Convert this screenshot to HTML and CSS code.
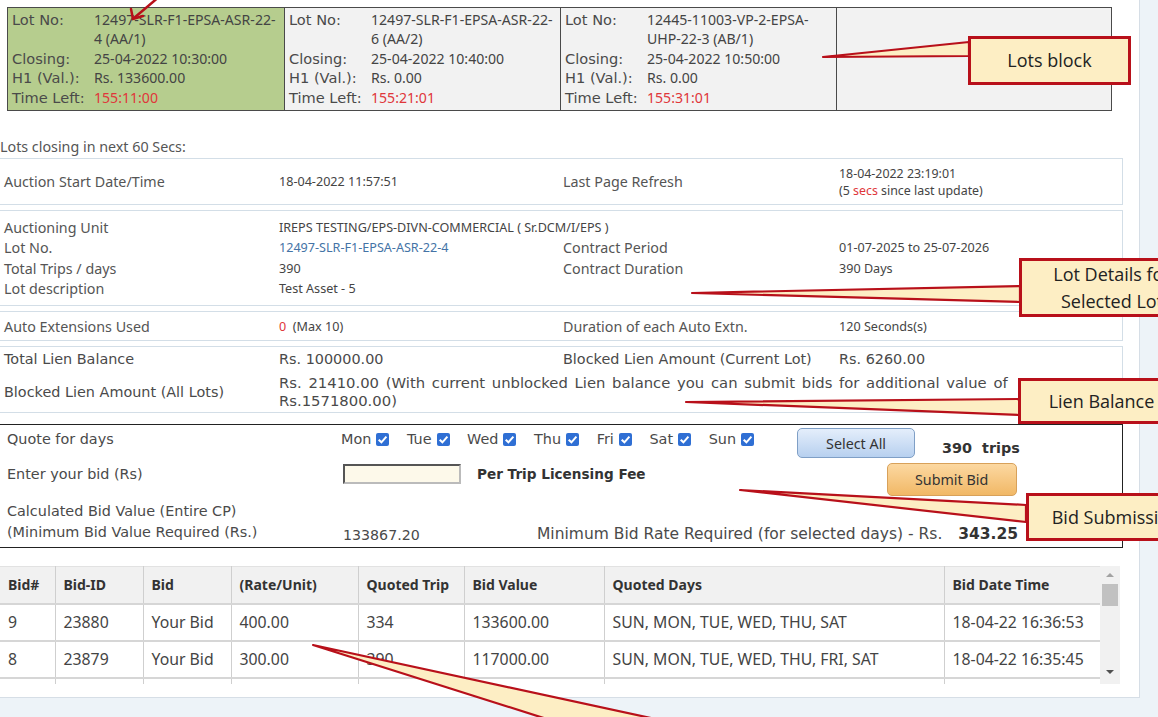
FILE: index.html
```html
<!DOCTYPE html>
<html>
<head>
<meta charset="utf-8">
<link rel="stylesheet" href="styles.css">
</head>
<body>
<div class="page">
  <div class="panel">
    <div class="lots">
      <div class="lot lot-sel">
        <span class="lk">Lot No:</span><span class="lv">12497-SLR-F1-EPSA-ASR-22-<br>4 (AA/1)</span>
        <span class="lk">Closing:</span><span class="lv">25-04-2022 10:30:00</span>
        <span class="lk">H1 (Val.):</span><span class="lv">Rs. 133600.00</span>
        <span class="lk">Time Left:</span><span class="lv red">155:11:00</span>
      </div>
      <div class="lot">
        <span class="lk">Lot No:</span><span class="lv">12497-SLR-F1-EPSA-ASR-22-<br>6 (AA/2)</span>
        <span class="lk">Closing:</span><span class="lv">25-04-2022 10:40:00</span>
        <span class="lk">H1 (Val.):</span><span class="lv">Rs. 0.00</span>
        <span class="lk">Time Left:</span><span class="lv red">155:21:01</span>
      </div>
      <div class="lot">
        <span class="lk">Lot No:</span><span class="lv">12445-11003-VP-2-EPSA-<br>UHP-22-3 (AB/1)</span>
        <span class="lk">Closing:</span><span class="lv">25-04-2022 10:50:00</span>
        <span class="lk">H1 (Val.):</span><span class="lv">Rs. 0.00</span>
        <span class="lk">Time Left:</span><span class="lv red">155:31:01</span>
      </div>
      <div class="lot lot-empty"></div>
    </div>

    <div class="closing">Lots closing in next 60 Secs:</div>

    <div class="box box-start">
      <span class="k">Auction Start Date/Time</span>
      <span class="v">18-04-2022 11:57:51</span>
      <span class="k">Last Page Refresh</span>
      <span class="v small">18-04-2022 23:19:01<br>(5 <span class="red">secs</span> since last update)</span>
    </div>

    <div class="box box-details">
      <span class="k">Auctioning Unit</span>
      <span class="v span3">IREPS TESTING/EPS-DIVN-COMMERCIAL ( Sr.DCM/I/EPS )</span>
      <span class="k">Lot No.</span>
      <span class="v link">12497-SLR-F1-EPSA-ASR-22-4</span>
      <span class="k">Contract Period</span>
      <span class="v">01-07-2025 to 25-07-2026</span>
      <span class="k">Total Trips / days</span>
      <span class="v">390</span>
      <span class="k">Contract Duration</span>
      <span class="v">390 Days</span>
      <span class="k">Lot description</span>
      <span class="v span3">Test Asset - 5</span>
    </div>

    <div class="box box-ext">
      <span class="k">Auto Extensions Used</span>
      <span class="v"><span class="red">0</span>&nbsp; (Max 10)</span>
      <span class="k">Duration of each Auto Extn.</span>
      <span class="v">120 Seconds(s)</span>
    </div>

    <div class="box box-lien">
      <span class="lk2">Total Lien Balance</span>
      <span class="lv2">Rs. 100000.00</span>
      <span class="lk2">Blocked Lien Amount (Current Lot)</span>
      <span class="lv2">Rs. 6260.00</span>
      <span class="lk2 mid">Blocked Lien Amount (All Lots)</span>
      <span class="lv2 span3 long">Rs. 21410.00 (With current unblocked Lien balance you can submit bids for additional value of<br>Rs.1571800.00)</span>
    </div>

    <div class="bid">
      <div class="brow brow1">
        <span class="blabel">Quote for days</span>
        <div class="days">
          <span class="day">Mon <i class="cb"></i></span>
          <span class="day">Tue <i class="cb"></i></span>
          <span class="day">Wed <i class="cb"></i></span>
          <span class="day">Thu <i class="cb"></i></span>
          <span class="day">Fri <i class="cb"></i></span>
          <span class="day">Sat <i class="cb"></i></span>
          <span class="day">Sun <i class="cb"></i></span>
        </div>
        <span class="btn btn-blue">Select All</span>
        <span class="trips">390&nbsp; trips</span>
      </div>
      <div class="brow brow2">
        <span class="blabel">Enter your bid (Rs)</span>
        <span class="inp"></span>
        <span class="fee">Per Trip Licensing Fee</span>
        <span class="btn btn-orange">Submit Bid</span>
      </div>
      <div class="brow brow3">
        <span class="blabel">Calculated Bid Value (Entire CP)<br>(Minimum Bid Value Required (Rs.)</span>
        <span class="calc">133867.20</span>
        <span class="minrate">Minimum Bid Rate Required (for selected days) - Rs.&nbsp; <b>343.25</b></span>
      </div>
    </div>

    <div class="grid-wrap">
      <div class="grid-clip">
        <table class="grid">
          <thead>
            <tr><th class="c1">Bid#</th><th class="c2">Bid-ID</th><th class="c3">Bid</th><th class="c4">(Rate/Unit)</th><th class="c5">Quoted Trip</th><th class="c6">Bid Value</th><th class="c7">Quoted Days</th><th class="c8">Bid Date Time</th></tr>
          </thead>
          <tbody>
            <tr><td>9</td><td>23880</td><td>Your Bid</td><td>400.00</td><td>334</td><td>133600.00</td><td>SUN, MON, TUE, WED, THU, SAT</td><td>18-04-22 16:36:53</td></tr>
            <tr><td>8</td><td>23879</td><td>Your Bid</td><td>300.00</td><td>390</td><td>117000.00</td><td>SUN, MON, TUE, WED, THU, FRI, SAT</td><td>18-04-22 16:35:45</td></tr>
            <tr><td>&nbsp;</td><td></td><td></td><td></td><td></td><td></td><td></td><td></td></tr>
          </tbody>
        </table>
      </div>
      <div class="sbar">
        <span class="sb-up"></span>
        <span class="sb-thumb"></span>
        <span class="sb-down"></span>
      </div>
    </div>
  </div>

  <svg class="annot" width="1158" height="717" viewBox="0 0 1158 717">
    <g fill="#fdeec4" stroke="#b8101a" stroke-width="2.2" stroke-linejoin="round">
      <polygon points="823,57 969,42 969,56"/>
      <polygon points="692,293 1020,286 1020,302"/>
      <polygon points="686,402 1020,399 1020,415"/>
      <polygon points="740,490 1026,505 1026,522"/>
      <polygon points="313,645 550,720 660,720"/>
    </g>
    <g stroke="#b8101a" stroke-width="2.5" fill="none" stroke-linecap="round">
      <line x1="160" y1="-4" x2="134" y2="18"/>
      <polyline points="131,9 133,19 143,16"/>
    </g>
  </svg>

  <div class="callout co-lots">Lots block</div>
  <div class="callout co-details">Lot Details for<br>Selected Lot</div>
  <div class="callout co-lien">Lien Balance</div>
  <div class="callout co-bid">Bid Submission</div>
</div>
</body>
</html>
```

FILE: styles.css
```css
* { box-sizing: border-box; }
html, body { margin: 0; padding: 0; }
body {
  background: #edf3f8;
  width: 1158px;
  height: 717px;
  overflow: hidden;
  font-family: "Noto Sans", "DejaVu Sans", sans-serif;
  color: #444;
}
.page { position: relative; width: 1158px; height: 717px; overflow: hidden; }

.panel {
  width: 1140px;
  height: 698px;
  background: #fff;
  border-right: 1px solid #d6dee6;
  border-bottom: 1px solid #d6dee6;
  padding-top: 7px;
  overflow: hidden;
}

/* ---------- lots block ---------- */
.lots {
  margin-left: 7px;
  width: 1105px;
  height: 104px;
  border: 1px solid #4a4a4a;
  display: flex;
}
.lot {
  display: grid;
  grid-template-columns: 82px 1fr;
  grid-auto-rows: min-content;
  align-content: start;
  padding: 2px 0 0 4px;
  line-height: 19.4px;
  background: #f2f2f2;
  border-right: 1px solid #4a4a4a;
  width: 276px;
  flex: none;
}
.lot-sel { background: #b6cd8e; width: 277px; }
.lot-empty { flex: 1; border-right: none; }
.lk { font-family: "DejaVu Sans", sans-serif; font-size: 14.6px; color: #4a4a4a; white-space: nowrap; }
.lv { font-family: "Noto Sans", sans-serif; font-size: 14.1px; color: #444; white-space: nowrap; }
.red { color: #e0363a; }

.closing {
  margin: 26px 0 0 0;
  font-size: 14.3px;
  color: #555;
  line-height: 20px;
}

/* ---------- info boxes ---------- */
.box {
  margin-left: -4px;
  width: 1127px;
  border: 1px solid #d3dee7;
  display: grid;
  grid-template-columns: 275px 284px 276px 1fr;
  padding-left: 7px;
  align-items: center;
  color: #555;
}
.k { font-size: 14.3px; white-space: nowrap; color: #555; }
.v { font-size: 12.6px; white-space: nowrap; color: #444; }
.v.small { font-size: 12.4px; line-height: 17px; }
.span3 { grid-column: span 3; }
.link { color: #4473a6; }

.box-start { margin-top: 1px; height: 47px; }
.box-details { margin-top: 5px; height: 96px; grid-auto-rows: 20.6px; align-content: center; }
.box-ext { margin-top: 5px; height: 30px; }
.box-lien {
  margin-top: 5px;
  height: 67px;
  grid-template-rows: 24px 1fr;
  align-content: center;
}
.lk2, .lv2 { font-family: "DejaVu Sans", sans-serif; font-size: 14.4px; color: #4a4a4a; white-space: nowrap; }
.lv2.long { line-height: 18px; white-space: nowrap; font-size: 14.8px; word-spacing: 2px; }
.mid { align-self: center; }

/* ---------- bid section ---------- */
.bid {
  margin-top: 11px;
  margin-left: -2px;
  width: 1125px;
  height: 124px;
  border-top: 1px solid #222;
  border-bottom: 1px solid #222;
  border-right: 1px solid #222;
  font-family: "DejaVu Sans", sans-serif;
  font-size: 14.4px;
  color: #4a4a4a;
  padding-left: 9px;
}
.brow { display: flex; align-items: center; white-space: nowrap; }
.blabel { width: 334px; flex: none; }
.brow1 { height: 28px; }
.brow2 { height: 42px; }
.brow3 { height: 52px; align-items: flex-end; padding-bottom: 4px; }
.brow3 .blabel { line-height: 21px; }
.days { display: flex; gap: 17.6px; }
.day { display: inline-flex; align-items: center; gap: 5px; }
.cb {
  display: inline-block;
  width: 13px; height: 13px;
  border-radius: 2px;
  background: #2f6fd4 url("data:image/svg+xml,%3Csvg xmlns='http://www.w3.org/2000/svg' viewBox='0 0 12 12'%3E%3Cpath d='M2.5 6.2 L5 8.6 L9.6 3.4' fill='none' stroke='white' stroke-width='1.9'/%3E%3C/svg%3E") center/13px 13px no-repeat;
}
.btn {
  display: inline-flex;
  align-items: center;
  justify-content: center;
  font-family: "Noto Sans", sans-serif;
  font-size: 14.3px;
  color: #333;
  border-radius: 5px;
}
.btn-blue {
  margin-left: 43px;
  width: 118px; height: 30px;
  background: linear-gradient(#e4eefb, #b7d0ef);
  border: 1px solid #7f9fc6;
  margin-top: 8px;
}
.trips { margin-left: 27px; font-weight: bold; font-size: 14.4px; color: #333; margin-top: 18px; }
.inp {
  width: 118px; height: 20px;
  background: #fdf9ea;
  border: 2px solid #4a4a4a;
  border-right-color: #bbb; border-bottom-color: #bbb;
  border-top-color: #555; border-left-color: #555;
  margin-left: 2px;
}
.fee { margin-left: 16px; font-weight: bold; font-size: 13.6px; color: #333; }
.btn-orange {
  margin-left: 241px;
  width: 130px; height: 33px;
  background: linear-gradient(#fcd8a1, #f1b866);
  border: 1px solid #d8a15a;
  margin-top: 10px;
}
.calc { margin-left: 2px; width: 194px; font-size: 14.2px; }
.minrate { font-size: 15.5px; }
.minrate b { font-size: 15.5px; color: #333; margin-left: 6px; }

/* ---------- bids grid ---------- */
.grid-wrap {
  margin-top: 18px;
  display: flex;
  width: 1120px;
  height: 118px;
}
.grid-clip { width: 1100px; height: 118px; overflow: hidden; }
.grid {
  border-collapse: collapse;
  width: 1100px;
  table-layout: fixed;
  font-size: 15.8px;
  color: #444;
}
.grid th, .grid td {
  border-left: 1px solid #cfcfcf;
  border-right: 1px solid #cfcfcf;
  border-bottom: 2px solid #d6d6d6;
  text-align: left;
  padding: 0 8px;
  height: 37px;
  white-space: nowrap;
  overflow: hidden;
}
.grid th { background: #f1f1f1; font-weight: bold; color: #333; font-size: 14px; border-top: 1px solid #e2e2e2; }
.grid tr > :first-child { border-left: none; }
.c1 { width: 55px; } .c2 { width: 88px; } .c3 { width: 88px; } .c4 { width: 127px; }
.c5 { width: 106px; } .c6 { width: 140px; } .c7 { width: 340px; } .c8 { width: 156px; }

.sbar {
  width: 20px;
  height: 118px;
  background: #f1f1f1;
  position: relative;
  display: flex;
  flex-direction: column;
  align-items: center;
}
.sb-up, .sb-down { width: 0; height: 0; border-left: 4px solid transparent; border-right: 4px solid transparent; }
.sb-up { border-bottom: 4px solid #a3a3a3; margin-top: 7px; }
.sb-down { border-top: 4px solid #505050; margin-top: auto; margin-bottom: 10px; }
.sb-thumb { width: 16px; height: 22px; background: #c1c1c1; margin-top: 7px; }

/* ---------- annotations ---------- */
.annot { position: absolute; left: 0; top: 0; pointer-events: none; }
.callout {
  position: absolute;
  background: #fdeec4;
  border: 3px solid #b8101a;
  font-family: "Open Sans", "Lato", sans-serif;
  font-size: 18px;
  color: #222;
  text-align: center;
  display: flex;
  align-items: center;
  justify-content: center;
  line-height: 27px;
  white-space: nowrap;
}
.co-lots { left: 968px; top: 36px; width: 163px; height: 49px; }
.co-details { left: 1019px; top: 258px; width: 186px; height: 59px; }
.co-lien { left: 1018px; top: 378px; width: 167px; height: 46px; }
.co-bid { left: 1026px; top: 493px; width: 180px; height: 48px; }
```
